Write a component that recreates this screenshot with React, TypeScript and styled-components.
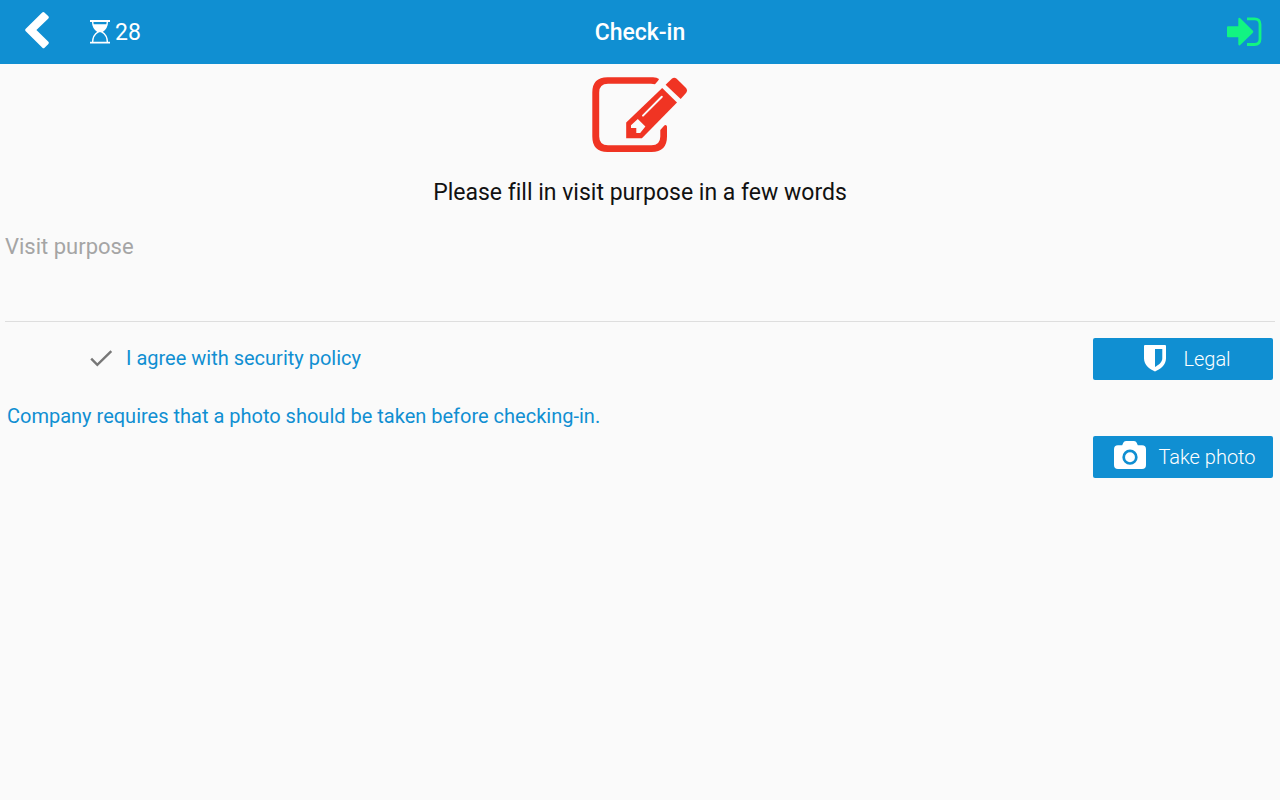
import React, { useState } from "react";
import styled, { createGlobalStyle } from "styled-components";

const blue = "#108fd2";

const GlobalStyle = createGlobalStyle`
  *, *::before, *::after { box-sizing: border-box; }
  body {
    margin: 0;
    background: #fafafa;
    color: #111;
    font-family: Roboto, "Liberation Sans", sans-serif;
    font-variant-ligatures: none;
  }
  svg { display: block; flex: none; }
`;

const Header = styled.header`
  display: grid;
  grid-template-columns: 1fr auto 1fr;
  align-items: center;
  height: 64px;
  padding: 0 18px;
  background: ${blue};
  color: #fff;
`;

const HeaderStart = styled.div`
  display: flex;
  align-items: center;
  gap: 40px;
  padding-left: 6px;
`;

const HeaderEnd = styled.div`
  display: flex;
  justify-content: flex-end;
`;

const IconButton = styled.button`
  padding: 0;
  border: 0;
  background: none;
  color: ${(p) => p.color || "#fff"};
  cursor: pointer;
`;

const Timer = styled.div`
  display: flex;
  align-items: center;
  gap: 5px;
  padding-top: 2px;
  font-size: 23px;
  line-height: 32px;
`;

const Title = styled.h1`
  margin: 0;
  padding-top: 2px;
  font-size: 23px;
  line-height: 32px;
  font-weight: 500;
`;

const Intro = styled.section`
  display: flex;
  flex-direction: column;
  align-items: center;
  gap: 24px;
  padding-top: 13px;
`;

const Prompt = styled.label`
  font-size: 23px;
  line-height: 32px;
`;

const Purpose = styled.textarea`
  display: block;
  width: calc(100% - 10px);
  height: 89px;
  margin: 24px 5px 0;
  padding: 0;
  border: 0;
  border-bottom: 1px solid #dedede;
  background: none;
  color: #111;
  font-family: inherit;
  font-size: 22px;
  line-height: 28px;
  resize: none;
  outline: none;
  &::placeholder { color: #a5a5a5; opacity: 1; }
`;

const PolicyRow = styled.div`
  display: flex;
  align-items: center;
  justify-content: space-between;
  padding: 16px 7px 0 90px;
`;

const PolicyLabel = styled.label`
  display: flex;
  align-items: center;
  gap: 13px;
  padding-bottom: 2px;
  color: ${blue};
  font-size: 20px;
  line-height: 24px;
  cursor: pointer;
`;

const CheckCell = styled.span`
  display: grid;
  width: 23px;
  height: 20px;
  color: #777;
  > * { grid-area: 1 / 1; }
`;

const Checkbox = styled.input`
  appearance: none;
  width: 100%;
  height: 100%;
  margin: 0;
  &:not(:checked) + svg { opacity: 0.2; }
`;

const PhotoSection = styled.section`
  display: flex;
  flex-direction: column;
  gap: 8px;
  padding: 24px 7px 0;
`;

const Notice = styled.p`
  margin: 0;
  color: ${blue};
  font-size: 20px;
  line-height: 24px;
`;

const ActionButton = styled.button`
  display: flex;
  align-items: center;
  justify-content: center;
  align-self: flex-end;
  gap: 12px;
  width: 180px;
  height: 42px;
  padding: 0 0 0 4px;
  border: 0;
  border-radius: 2px;
  background: ${blue};
  color: #fff;
  font-family: inherit;
  font-size: 20px;
  font-weight: 300;
  line-height: 24px;
  cursor: pointer;
`;

const BackIcon = () => (
  <svg width="26" height="42" viewBox="0 0 26 42" fill="currentColor" aria-hidden="true">
    <path d="M1.5 18.1 18.2 1.5Q19.3.5 20.4 1.5L24.4 5.3Q25.4 6.4 24.4 7.5L12.4 19 24.4 30.7Q25.4 31.8 24.4 32.9L20.6 36.7Q19.5 37.7 18.4 36.7L1.5 20Q.7 19 1.5 18.1Z" />
  </svg>
);

const HourglassIcon = () => (
  <svg width="20" height="26" viewBox="0 0 20 26" aria-hidden="true">
    <path d="M0 1H20M0 22.7H20" stroke="currentColor" strokeWidth="1.8" />
    <path d="M2.6 1C2.6 7 4.4 9.5 8.2 11.8 4.4 14 2.6 17 2.6 22.5M17.4 1C17.4 7 15.6 9.5 11.8 11.8 15.6 14 17.4 17 17.4 22.5" fill="none" stroke="currentColor" strokeWidth="1.4" />
    <path d="M3 4.2H17C16.5 8 14.7 10 12.2 11.5V12.2H7.8V11.5C5.3 10 3.5 8 3 4.2Z" fill="currentColor" />
  </svg>
);

const SignInIcon = () => (
  <svg width="35" height="30" viewBox="0 0 35 30" aria-hidden="true">
    <path d="M1 9.2H11.3V2Q11.5.3 13 1L25.9 13.8Q26.8 14.8 25.9 15.8L13 28.2Q11.5 29 11.3 27.3V20.2H1Q0 20.2 0 19.2V10.2Q0 9.2 1 9.2Z" fill="currentColor" />
    <path d="M20 1.8H27.5Q33 1.8 33 7.3V22Q33 27.5 27.5 27.5H20" fill="none" stroke="currentColor" strokeWidth="2.8" />
  </svg>
);

const EditIcon = () => (
  <svg width="96" height="76" viewBox="0 0 96 76" aria-hidden="true">
    <g fill="#f03423">
      <path d="M15.5.3H61Q65 .3 67 2 66.8 3 65.6 4.2L63 7.2Q61 6.8 59 6.8H16Q7.2 6.8 7.2 15.5V59.5Q7.2 68.2 16 68.2H59.5Q68.3 68.2 68.3 59.5V53L72.3 48.6Q74 47.2 75 49.5V59.5Q75 75 59.5 75H15.5Q.3 75 .3 59.5V15.5Q.3.3 15.5.3Z" />
      <path d="M70.2 10.9 85 25.4 49.9 61.2H34.2V45.5Z" />
      <path d="M73.6 7.8 79.8 1.8Q82.2-.2 84.7 1.8L94 11Q96 13.5 94 16L88.7 21.9Z" />
    </g>
    <g fill="#fafafa">
      <path d="M45.8 42 53.4 49.5 48.2 55.9H44.3V50.9H39V48.2Z" />
      <path d="M51 38.6 69.8 19.7" stroke="#fafafa" strokeWidth="2" strokeLinecap="round" />
    </g>
  </svg>
);

const CheckIcon = () => (
  <svg width="23" height="20" viewBox="0 -2 23 20" aria-hidden="true">
    <path d="M1.2 8.7 7.3 14.9 21.3 1.2" fill="none" stroke="currentColor" strokeWidth="2.4" />
  </svg>
);

const ShieldIcon = () => (
  <svg width="32" height="28" viewBox="-1 0 32 28" aria-hidden="true">
    <path fill="currentColor" fillRule="evenodd" d="M5 0H25Q26 0 26 1V13.5C26 20 20 24.4 15 26.5 10 24.4 4 20 4 13.5V1Q4 0 5 0ZM15 4V22C18.5 20 22.3 17.2 22.3 13.5V4Z" />
  </svg>
);

const CameraIcon = () => (
  <svg width="32" height="32" viewBox="0 0 32 32" aria-hidden="true">
    <path fill="currentColor" d="M4 4.2H8.2L9.3 1.8Q10 0 12 0H20Q22 0 22.7 1.8L23.8 4.2H28Q32 4.2 32 8.2V24Q32 28 28 28H4Q0 28 0 24V8.2Q0 4.2 4 4.2Z" />
    <circle cx="16" cy="16.2" r="6.3" fill="none" stroke={blue} strokeWidth="2.7" />
  </svg>
);

export default function App() {
  const [agreed, setAgreed] = useState(true);
  const [purpose, setPurpose] = useState("");

  return (
    <>
      <GlobalStyle />
      <Header>
        <HeaderStart>
          <IconButton type="button" aria-label="Back"><BackIcon /></IconButton>
          <Timer><HourglassIcon />28</Timer>
        </HeaderStart>
        <Title>Check-in</Title>
        <HeaderEnd>
          <IconButton type="button" color="#12f482" aria-label="Complete check-in"><SignInIcon /></IconButton>
        </HeaderEnd>
      </Header>
      <main>
        <Intro>
          <EditIcon />
          <Prompt htmlFor="purpose">Please fill in visit purpose in a few words</Prompt>
        </Intro>
        <Purpose
          id="purpose"
          placeholder="Visit purpose"
          value={purpose}
          onChange={(e) => setPurpose(e.target.value)}
        />
        <PolicyRow>
          <PolicyLabel>
            <CheckCell>
              <Checkbox type="checkbox" checked={agreed} onChange={(e) => setAgreed(e.target.checked)} />
              <CheckIcon />
            </CheckCell>
            I agree with security policy
          </PolicyLabel>
          <ActionButton type="button"><ShieldIcon />Legal</ActionButton>
        </PolicyRow>
        <PhotoSection>
          <Notice>Company requires that a photo should be taken before checking-in.</Notice>
          <ActionButton type="button"><CameraIcon />Take photo</ActionButton>
        </PhotoSection>
      </main>
    </>
  );
}
